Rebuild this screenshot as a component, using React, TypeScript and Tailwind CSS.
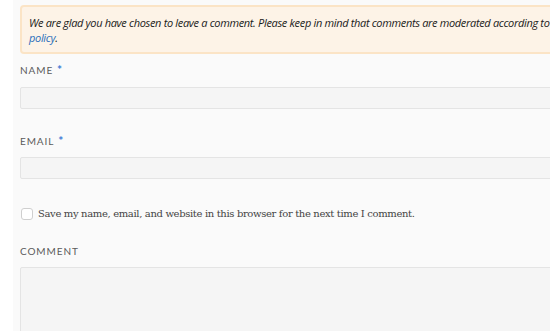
import React from 'react';

const Label = ({ text, required }: { text: string; required?: boolean }) => (
  <label className="block text-[10px] uppercase tracking-[0.09em] text-[#5a5a5a] font-['Lato','Noto_Sans',sans-serif] leading-none">
    {text}
    {required && <span className="ml-[4px] text-[12px] font-bold text-[#3a7bd5]">*</span>}
  </label>
);

const App = () => {
  return (
    <div className="w-[550px] h-[331px] overflow-hidden bg-white">
      {/*
      comment form, cropped on the right
      */}
      <div className="ml-[13px] w-[640px] h-full bg-[#fafafa] pl-[7px] pt-[5px]">
        <div className="w-[620px] bg-[#fdf3e7] border-2 border-[#fbe4c6] rounded-[4px] px-[7px] pt-[8px] pb-[7px]">
          <p className="text-[11px] italic font-medium leading-[15px] text-[#1a1a1a] whitespace-nowrap font-['Open_Sans','Noto_Sans',sans-serif] tracking-[-0.03em]">
            We are glad you have chosen to leave a comment. Please keep in mind that comments are moderated according to our comment
            <br />
            <a href="#" className="text-[#2a6ebb]">policy</a>.
          </p>
        </div>

        <form className="w-[620px]">
          <div className="pt-[10px]">
            <Label text="Name" required />
            <input
              type="text"
              className="mt-[11px] block w-full h-[22px] bg-[#f5f5f5] border border-[#e4e4e4] rounded-[2px]"
            />
          </div>

          <div className="pt-[26px]">
            <Label text="Email" required />
            <input
              type="email"
              className="mt-[10px] block w-full h-[22px] bg-[#f5f5f5] border border-[#e4e4e4] rounded-[2px]"
            />
          </div>

          <div className="pt-[29px] flex items-center gap-[5px]">
            <span className="block w-[12px] h-[12px] ml-[1px] border border-[#cfcfcf] rounded-[3px] bg-white" />
            <span className="text-[10px] text-[#444] font-['DejaVu_Serif',serif] leading-none tracking-[-0.035em]">
              Save my name, email, and website in this browser for the next time I comment.
            </span>
          </div>

          <div className="pt-[26px]">
            <Label text="Comment" />
            <textarea className="mt-[11px] block w-full h-[80px] bg-[#f5f5f5] border border-[#e4e4e4] rounded-[2px] resize-none"></textarea>
          </div>
        </form>
      </div>
    </div>
  );
};

export default App;
